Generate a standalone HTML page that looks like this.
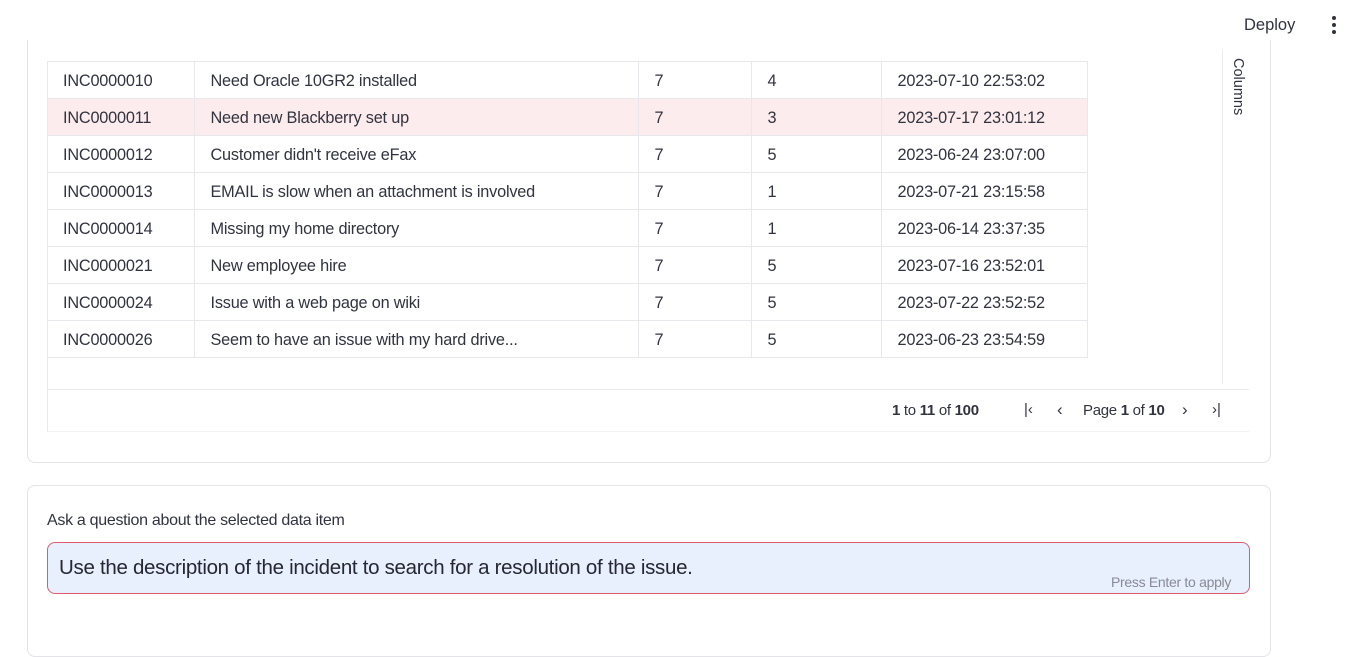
<!DOCTYPE html>
<html><head><style>
body{margin:0;width:1348px;height:634px;background:#fff;font-family:"Liberation Sans",sans-serif;color:#31333f;position:relative;overflow:hidden}
.abs{position:absolute}
.card{position:absolute;left:27px;width:1242px;border:1px solid #e3e3e8;border-radius:8px}
table{border-collapse:collapse;position:absolute;left:47px;top:61px;font-size:16.3px;letter-spacing:-0.2px}
td{height:37px;border-top:1px solid #e8e8ec;border-right:1px solid #e8e8ec;padding:2px 0 0 16px;white-space:nowrap;color:#31333f;box-sizing:border-box}
tr.sel td{background:#fdeced}
</style></head><body>
<div class="abs" style="left:1244px;top:16px;font-size:16.5px">Deploy</div>
<svg class="abs" style="left:1328px;top:14px" width="12" height="22"><circle cx="6" cy="4" r="2" fill="#31333f"/><circle cx="6" cy="11" r="2" fill="#31333f"/><circle cx="6" cy="18" r="2" fill="#31333f"/></svg>
<div class="card" style="top:40px;height:422px;border-top:none;border-radius:0 0 8px 8px"></div>
<table>
<tr><td style="width:147px">INC0000010</td><td style="width:444px">Need Oracle 10GR2 installed</td><td style="width:113px">7</td><td style="width:130px">4</td><td style="width:206px">2023-07-10 22:53:02</td></tr>
<tr class="sel"><td>INC0000011</td><td>Need new Blackberry set up</td><td>7</td><td>3</td><td>2023-07-17 23:01:12</td></tr>
<tr><td>INC0000012</td><td>Customer didn't receive eFax</td><td>7</td><td>5</td><td>2023-06-24 23:07:00</td></tr>
<tr><td>INC0000013</td><td>EMAIL is slow when an attachment is involved</td><td>7</td><td>1</td><td>2023-07-21 23:15:58</td></tr>
<tr><td>INC0000014</td><td>Missing my home directory</td><td>7</td><td>1</td><td>2023-06-14 23:37:35</td></tr>
<tr><td>INC0000021</td><td>New employee hire</td><td>7</td><td>5</td><td>2023-07-16 23:52:01</td></tr>
<tr><td>INC0000024</td><td>Issue with a web page on wiki</td><td>7</td><td>5</td><td>2023-07-22 23:52:52</td></tr>
<tr><td>INC0000026</td><td>Seem to have an issue with my hard drive...</td><td>7</td><td>5</td><td>2023-06-23 23:54:59</td></tr>
<tr><td colspan="5" style="border:none;border-top:1px solid #e8e8ec;height:0;padding:0"></td></tr>
</table>
<div class="abs" style="left:47px;top:61px;width:1px;height:370px;background:#e8e8ec"></div>
<div class="abs" style="left:1222px;top:50px;width:1px;height:334px;background:#ececf0"></div>
<div class="abs" style="left:1230px;top:58px;font-size:14.5px;writing-mode:vertical-rl">Columns</div>
<div class="abs" style="left:47px;top:389px;width:1202px;height:1px;background:#ececf0"></div>
<div class="abs" style="left:47px;top:431px;width:1202px;height:1px;background:#f2f2f5"></div>
<div class="abs" style="left:892px;top:402px;font-size:15px;letter-spacing:-0.3px"><b>1</b> to <b>11</b> of <b>100</b></div>
<div class="abs" style="left:1024px;top:401px;font-size:15px">|‹</div>
<div class="abs" style="left:1057px;top:400px;font-size:17px">‹</div>
<div class="abs" style="left:1083px;top:402px;font-size:15px;letter-spacing:-0.3px">Page <b>1</b> of <b>10</b></div>
<div class="abs" style="left:1182px;top:400px;font-size:17px">›</div>
<div class="abs" style="left:1212px;top:401px;font-size:15px">›|</div>
<div class="card" style="top:485px;height:170px"></div>
<div class="abs" style="left:47px;top:512px;font-size:16px;letter-spacing:-0.3px">Ask a question about the selected data item</div>
<div class="abs" style="left:47px;top:542px;width:1201px;height:50px;background:#e8f0fe;border:1px solid #e05a6e;border-radius:8px"></div>
<div class="abs" style="left:59px;top:556px;font-size:20.5px;color:#262730;letter-spacing:-0.3px">Use the description of the incident to search for a resolution of the issue.</div>
<div class="abs" style="left:1111px;top:574px;font-size:14px;color:#888a94;letter-spacing:-0.3px">Press Enter to apply</div>
</body></html>
